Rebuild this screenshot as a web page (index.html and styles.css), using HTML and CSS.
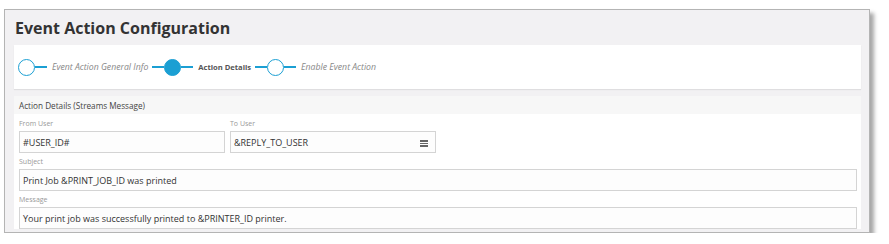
FILE: index.html
```html
<!DOCTYPE html>
<html lang="en">
<head>
  <meta charset="UTF-8" />
  <title>Event Action Configuration</title>
  <link rel="stylesheet" href="styles.css">
</head>
<body>

  <div class="frame">
    <h1 class="page-title">Event Action Configuration</h1>

    <!-- Wizard steps -->
    <div class="stepper">
      <div class="step">
        <span class="dot"></span>
        <span class="line"></span>
        <span class="step-label">Event Action General Info</span>
      </div>
      <div class="step current">
        <span class="line"></span>
        <span class="dot"></span>
        <span class="line"></span>
        <span class="step-label">Action Details</span>
      </div>
      <div class="step">
        <span class="line"></span>
        <span class="dot"></span>
        <span class="line"></span>
        <span class="step-label">Enable Event Action</span>
      </div>
    </div>

    <div class="panel">
      <div class="panel-head">Action Details (Streams Message)</div>
      <div class="panel-body">
        <div class="row two">
          <div class="field">
            <label>From User</label>
            <div class="input">#USER_ID#</div>
          </div>
          <div class="field">
            <label>To User</label>
            <div class="input">
              &amp;REPLY_TO_USER
              <span class="menu-icon"><i></i><i></i><i></i></span>
            </div>
          </div>
        </div>
        <div class="field">
          <label>Subject</label>
          <div class="input">Print Job &amp;PRINT_JOB_ID was printed</div>
        </div>
        <div class="field">
          <label>Message</label>
          <div class="input">Your print job was successfully printed to &amp;PRINTER_ID printer.</div>
        </div>
      </div>
    </div>
  </div>

</body>
</html>
```

FILE: styles.css
```css
body {
  font-family: 'Open Sans', sans-serif;
  background: #fff;
  margin: 0;
  padding: 0;
}

.frame {
  margin: 9px 0 0 4px;
  width: 866px;
  height: 224px;
  border: 1px solid #b4b4b4;
  background: #f2f1f3;
  box-shadow: 4px 4px 4px rgba(0, 0, 0, 0.35);
  padding: 0 8px 0 9px;
  box-sizing: border-box;
  overflow: hidden;
}

.page-title {
  margin: 0;
  height: 35px;
  line-height: 36px;
  font-size: 16px;
  font-weight: 700;
  color: #333;
  padding-left: 1px;
}

.stepper {
  display: flex;
  align-items: center;
  height: 44px;
  background: #fff;
  padding-left: 4px;
  box-shadow: 0 1px 1px rgba(0, 0, 0, 0.08);
}

.step {
  display: flex;
  align-items: center;
}

.dot {
  width: 15px;
  height: 15px;
  border: 1.5px solid #1b9fd3;
  border-radius: 50%;
  background: #fff;
}

.current .dot {
  background: #1b9fd3;
}

.line {
  width: 12px;
  height: 2px;
  background: #1b9fd3;
}

.step-label {
  font-size: 8.7px;
  font-style: italic;
  color: #888;
  margin: 0 4px 0 5px;
}

.current .step-label {
  font-size: 7.6px;
  font-style: normal;
  font-weight: 700;
  color: #555;
}

.panel {
  margin-top: 7px;
  background: #fff;
}

.panel-head {
  height: 18px;
  line-height: 19px;
  background: #f7f7f7;
  font-size: 8.2px;
  color: #444;
  padding-left: 5px;
}

.panel-body {
  padding: 1px 4px 0 5px;
}

.row.two {
  display: flex;
  gap: 5px;
}

.row.two .field {
  width: 206px;
}

.field label {
  display: block;
  font-size: 7px;
  color: #999;
  height: 16px;
  line-height: 18px;
}

.input {
  position: relative;
  height: 22px;
  line-height: 21px;
  border: 1px solid #d4d4d4;
  background: #fdfdfd;
  box-sizing: border-box;
  font-size: 9px;
  color: #333;
  padding-left: 3px;
}

.menu-icon {
  position: absolute;
  right: 7px;
  top: 8px;
  display: flex;
  flex-direction: column;
  gap: 1px;
}

.menu-icon i {
  display: block;
  width: 8px;
  height: 1.5px;
  background: #666;
}
```
